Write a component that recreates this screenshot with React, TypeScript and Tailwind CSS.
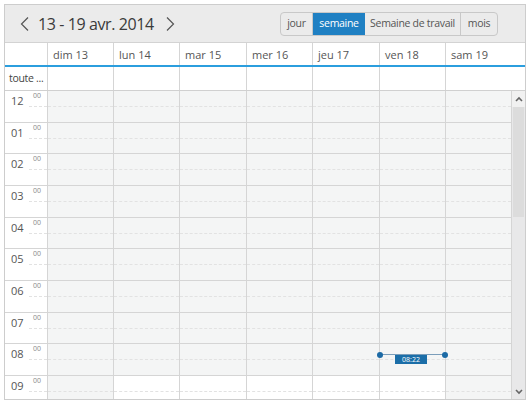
import React from "react";

const dayCols = [66, 66, 67, 66, 67, 66, 66];
const headerCols = [66, 66, 67, 66, 67, 66, 79];
const days = ["dim 13", "lun 14", "mar 15", "mer 16", "jeu 17", "ven 18", "sam 19"];
const hours = ["12", "01", "02", "03", "04", "05", "06", "07", "08", "09"];

export default function App() {
  return (
    <div className="w-[530px] h-[405px] bg-white pt-[4px] pl-[4px]" style={{ fontFamily: '"Open Sans", "Noto Sans", sans-serif' }}>
      <div className="w-[522px] h-[396px] border border-[#cdcdcd] flex flex-col overflow-hidden">
        {/* toolbar */}
        <div className="h-[38px] shrink-0 bg-[#ebebeb] border-b border-[#d3d3d3] flex items-center pl-[14px] pr-[27px]">
          <svg width="12" height="16" viewBox="0 0 12 16">
            <polyline points="9,1.5 2.5,8 9,14.5" fill="none" stroke="#555" strokeWidth="1.2" />
          </svg>
          <span className="ml-[7px] text-[16px] text-[#3a3a3a] leading-none tracking-[-0.4px]">13 - 19 avr. 2014</span>
          <svg width="12" height="16" viewBox="0 0 12 16" className="ml-[10px]">
            <polyline points="3,1.5 9.5,8 3,14.5" fill="none" stroke="#555" strokeWidth="1.2" />
          </svg>
          <div className="ml-auto flex h-[24px] border border-[#c8c8c8] rounded-[4px] overflow-hidden text-[10.5px] tracking-[-0.3px] text-[#555] mt-[1px] whitespace-nowrap">
            <div className="w-[32px] flex items-center justify-center border-r border-[#c8c8c8]">jour</div>
            <div className="w-[52px] flex items-center justify-center bg-[#1f80c3] text-white">semaine</div>
            <div className="w-[96px] flex items-center justify-center border-r border-[#c8c8c8]">Semaine de travail</div>
            <div className="w-[36px] flex items-center justify-center">mois</div>
          </div>
        </div>
        {/* header days */}
        <div className="h-[24px] shrink-0 flex border-b-2 border-[#2b9ede]">
          <div className="w-[43px] shrink-0 border-r border-[#d5d5d5]" />
          {days.map((d, i) => (
            <div
              key={d}
              className={`shrink-0 pl-[5px] pt-[4px] text-[11px] text-[#555] ${i < 6 ? "border-r border-[#d5d5d5]" : ""}`}
              style={{ width: headerCols[i] }}
            >
              {d}
            </div>
          ))}
        </div>
        {/* all day row */}
        <div className="h-[24px] shrink-0 flex border-b border-[#d0d0d0]">
          <div className="w-[43px] shrink-0 border-r border-[#d5d5d5] pl-[4px] pt-[4px] text-[10.5px] tracking-[-0.3px] text-[#444] whitespace-nowrap overflow-hidden">toute ...</div>
          {days.map((d, i) => (
            <div
              key={d}
              className={`shrink-0 ${i < 6 ? "border-r border-[#d5d5d5]" : ""}`}
              style={{ width: headerCols[i] }}
            />
          ))}
        </div>
        {/* body */}
        <div className="flex-1 flex overflow-hidden relative">
          <div className="w-[43px] shrink-0 border-r border-[#d5d5d5]">
            {hours.map((h) => (
              <div key={h} className="h-[31.67px] border-b border-[#d5d5d5] relative box-border">
                <span className="absolute left-[6px] top-[2px] text-[11px] leading-[16px] text-[#555]">{h}</span>
                <span className="absolute left-[28px] top-[1px] text-[7px] leading-[8px] text-[#8a8a8a]">00</span>
                <div className="absolute left-[24px] right-0 top-[15px] border-t border-dashed border-[#e2e2e2]" />
              </div>
            ))}
          </div>
          {dayCols.map((w, di) => (
            <div key={di} className="shrink-0 border-r border-[#d5d5d5] relative" style={{ width: w }}>
              {hours.map((h, hi) => {
                const work = di >= 1 && di <= 5 && hi >= 9;
                return (
                  <div
                    key={h}
                    className={`h-[31.67px] border-b border-[#d5d5d5] relative box-border ${work ? "bg-white" : "bg-[#f4f5f5]"}`}
                  >
                    <div className="absolute left-0 right-0 top-[15px] border-t border-dashed border-[#e2e2e2]" />
                  </div>
                );
              })}
            </div>
          ))}
          {/* scrollbar */}
          <div className="w-[13px] shrink-0 bg-[#e8e8e9] flex flex-col">
            <div className="h-[16px] bg-[#f1f1f1] flex items-center justify-center">
              <svg width="8" height="6" viewBox="0 0 8 6">
                <polyline points="1,5 4,2 7,5" fill="none" stroke="#666" strokeWidth="1.6" />
              </svg>
            </div>
            <div className="h-[110px] bg-[#dcdcdc] mx-[1px]" />
            <div className="flex-1" />
            <div className="h-[14px] flex items-center justify-center">
              <svg width="8" height="6" viewBox="0 0 8 6">
                <polyline points="1,1 4,4 7,1" fill="none" stroke="#666" strokeWidth="1.6" />
              </svg>
            </div>
          </div>
          {/* event / time marker */}
          <div className="absolute left-[374px] top-[263px] w-[67px] h-[1px] bg-[#7a9dba]" />
          <div className="absolute left-[372px] top-[261px] w-[6px] h-[6px] rounded-full bg-[#1c6aa5]" />
          <div className="absolute left-[437px] top-[261px] w-[6px] h-[6px] rounded-full bg-[#1c6aa5]" />
          <div className="absolute left-[390px] top-[264px] w-[32px] h-[9px] bg-[#1b6ea8] text-white text-[7px] leading-[9px] text-center">08:22</div>
        </div>
      </div>
    </div>
  );
}
